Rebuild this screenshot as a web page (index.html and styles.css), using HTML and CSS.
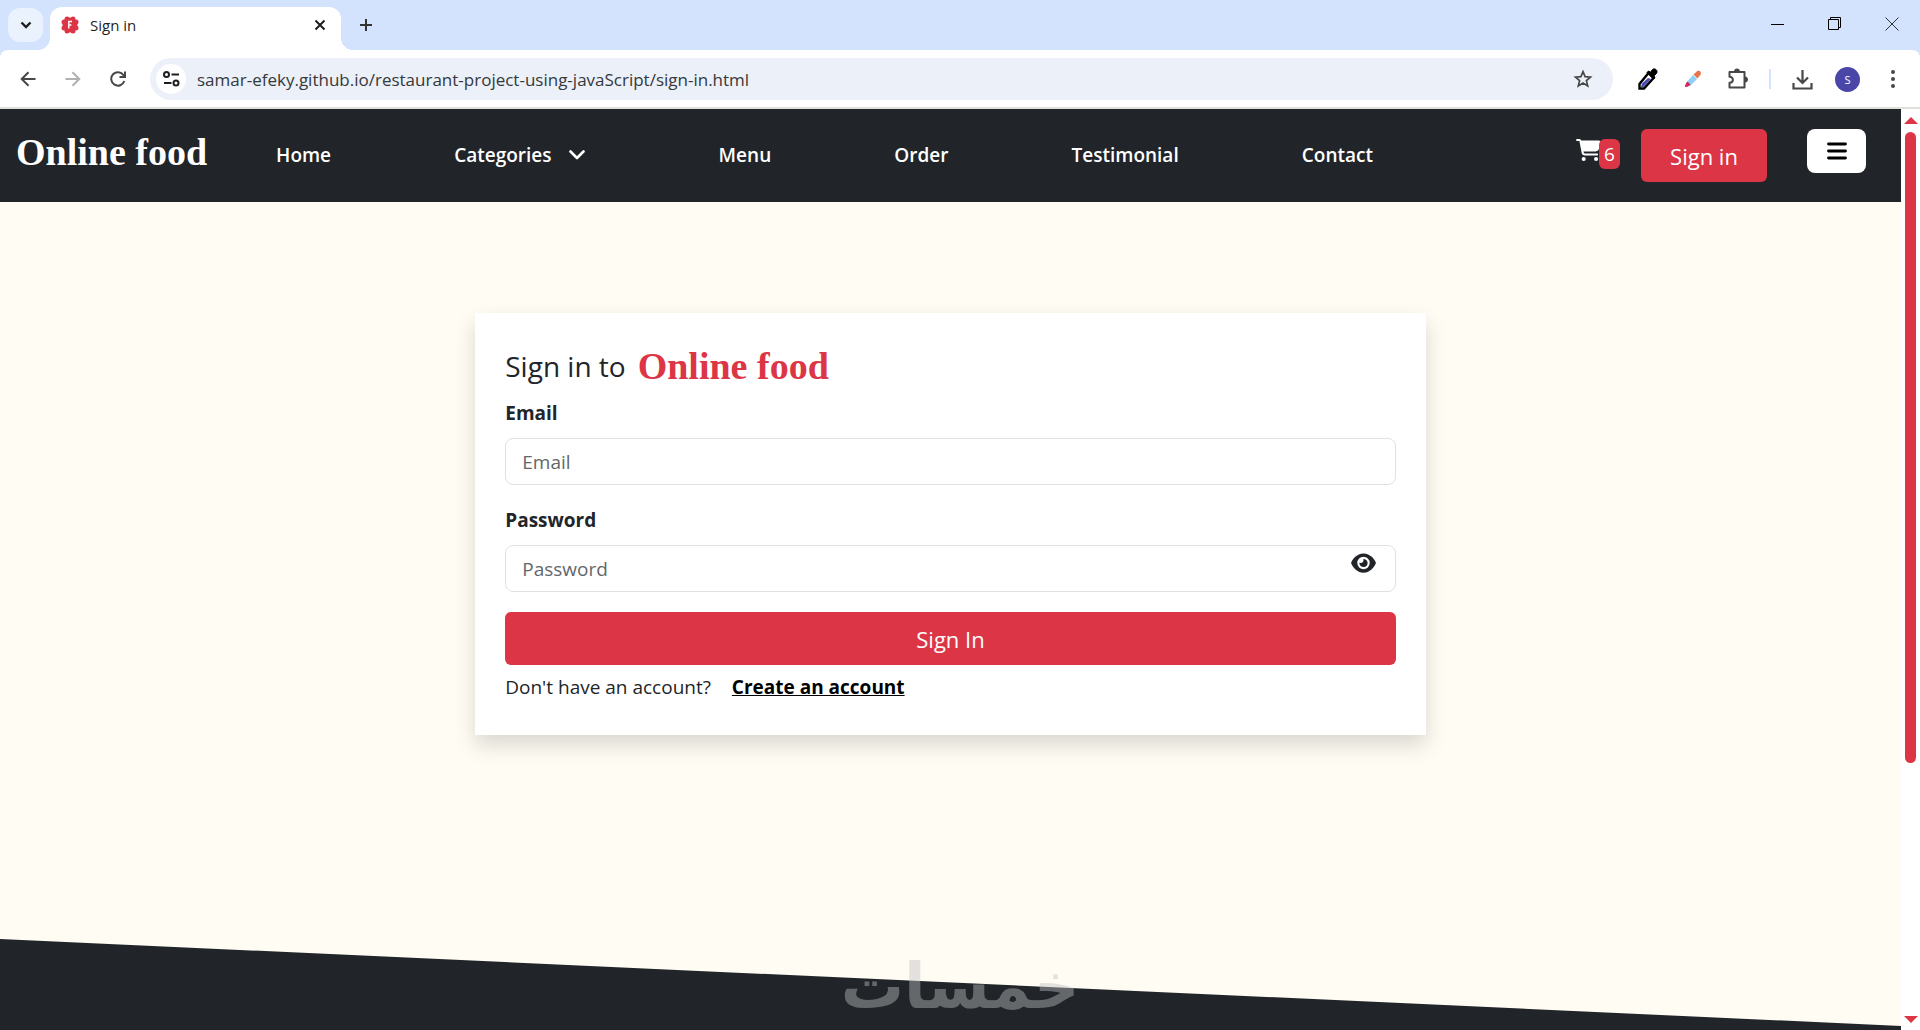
FILE: index.html
```html
<!DOCTYPE html>
<html lang="en">
  <head>
    <meta charset="UTF-8" />
    <meta name="viewport" content="width=device-width, initial-scale=1.0" />
    <title>Sign in</title>
    <link rel="stylesheet" href="styles.css">
  </head>
  <body>
    <!-- browser tabs -->
    <div class="tab-strip">
      <button class="tab-search" aria-label="Search tabs">
        <svg width="12" height="8" viewBox="0 0 12 8"><path d="M1.5 1.5 6 6l4.5-4.5" fill="none" stroke="#1f1f1f" stroke-width="2.4" /></svg>
      </button>
      <div class="tab">
        <svg width="18" height="18" viewBox="0 0 18 18">
          <g fill="#dc3545">
            <circle cx="9" cy="9" r="7.5" />
            <circle cx="6" cy="3" r="2.5" /><circle cx="12" cy="3" r="2.5" />
            <circle cx="15" cy="6" r="2.5" /><circle cx="15" cy="12" r="2.5" />
            <circle cx="12" cy="15" r="2.5" /><circle cx="6" cy="15" r="2.5" />
            <circle cx="3" cy="12" r="2.5" /><circle cx="3" cy="6" r="2.5" />
          </g>
          <path d="M7.8 12.5v-7H11M7.800 9h2.6" fill="none" stroke="#fff" stroke-width="1.4" />
        </svg>
        <span class="tab-title">Sign in</span>
        <button class="tab-close" aria-label="Close tab">
          <svg width="12" height="12" viewBox="0 0 12 12"><path d="m1.5 1.5 9 9m0-9-9 9" stroke="#1f1f1f" stroke-width="2" /></svg>
        </button>
      </div>
      <button class="new-tab" aria-label="New tab">
        <svg width="14" height="14" viewBox="0 0 14 14"><path d="M7 1v12M1 7h12" stroke="#333" stroke-width="2" /></svg>
      </button>
      <div class="window-buttons">
        <button aria-label="Minimize"><svg width="14" height="14" viewBox="0 0 14 14"><path d="M0 7h13v1H0z" /></svg></button>
        <button aria-label="Restore"><svg width="14" height="14" viewBox="0 0 14 14"><path d="M.5 2.5h10v10H.5zM2.5 2.5v-2h10v10h-2" fill="none" stroke="#000" /></svg></button>
        <button aria-label="Close"><svg width="14" height="14" viewBox="0 0 14 14"><path d="m.5.5 13 13m0-13-13 13" stroke="#333" /></svg></button>
      </div>
    </div>

    <!-- browser toolbar -->
    <div class="toolbar-wrap">
      <div class="toolbar">
        <button class="tool" aria-label="Back">
          <svg width="16" height="16" viewBox="0 0 16 16"><path d="M15.5 8H2M8.500 1.2 1.7 8l6.800 6.800" fill="none" stroke="#474747" stroke-width="2" /></svg>
        </button>
        <button class="tool" aria-label="Forward">
          <svg width="16" height="16" viewBox="0 0 16 16"><path d="M.5 8H14M7.500 1.2 14.3 8l-6.800 6.800" fill="none" stroke="#b0b1b0" stroke-width="2" /></svg>
        </button>
        <button class="tool" aria-label="Reload">
          <svg width="16" height="16" viewBox="0 0 16 16"><path d="M14.3 10A6.700 6.700 0 1 1 13.5 4.2L15 6M15 .5V6H9.500" fill="none" stroke="#474747" stroke-width="2" /></svg>
        </button>
        <div class="omnibox">
          <button class="site-info" aria-label="View site information">
            <svg width="17" height="16" viewBox="0 0 17 16"><g fill="none" stroke="#1f1f1f" stroke-width="2"><circle cx="3.5" cy="3.5" r="2.5" /><path d="M8.500 3.5H16M1 12h7.500" /><circle cx="13" cy="12" r="2.5" /></g></svg>
          </button>
          <input type="text" class="url" aria-label="Address" value="samar-efeky.github.io/restaurant-project-using-javaScript/sign-in.html" />
          <button class="star" aria-label="Bookmark this page">
            <svg width="20" height="20" viewBox="0 0 20 20"><path d="m10 2.6 2.1 5 5.4.5-4.1 3.5 1.3 5.3-4.700-2.800-4.700 2.800 1.300-5.300L2.500 8.100l5.400-.5z" fill="none" stroke="#474747" stroke-width="1.7" /></svg>
          </button>
        </div>
        <button class="tool" aria-label="Color picker">
          <svg width="20" height="22" viewBox="0 0 20 22">
            <path d="m10.5 5 5 5-9.500 10.500H1.500V16z" fill="#fff" stroke="#000" stroke-width="2.4" />
            <path d="m4 15.5 6-5.500 3 1-7.500 8H3z" fill="#4b4cae" />
            <path d="M9 4.500 10.500 3l2 1.200 2-2.700c2-2 6 1 4 4l-2.500 2.300 1 2L15.500 11z" stroke="#000" />
          </svg>
        </button>
        <button class="tool" aria-label="Eyedropper">
          <svg width="18" height="18" viewBox="0 0 18 18">
            <path d="m9 5 4 4-7 7-4-3z" fill="#8ed0f5" />
            <path d="M9.500 4.500 13 1.300c3-1.500 4.800 1 3.500 3.500L13.500 8.500z" fill="#e8744a" />
            <path d="m3.500 11.500 3 3c-1.500 2-3.500 2.500-5.500 2.500 0-2.500 1-4 2.500-5.500z" fill="#d9265b" />
          </svg>
        </button>
        <button class="tool" aria-label="Extensions">
          <svg width="22" height="22" viewBox="0 0 22 22"><path d="M2.500 4h15v15.500h-15v-4.700c4.500 0 4.500-6 0-6z" fill="none" stroke="#474747" stroke-width="2" stroke-linejoin="round" /><path d="M7 3.500c0-4 6-4 6 0zM18 8.500c4 0 4 6 0 6z" fill="#474747" /></svg>
        </button>
        <span class="tool-divider"></span>
        <button class="tool" aria-label="Downloads">
          <svg width="21" height="21" viewBox="0 0 21 21"><path d="M10.500 1v12.500M5 8.500l5.500 5.500L16 8.500M1.500 14v5.500h18V14" fill="none" stroke="#474747" stroke-width="2.2" /></svg>
        </button>
        <button class="tool" aria-label="Profile"><span class="avatar">S</span></button>
        <button class="tool" aria-label="Menu">
          <svg width="4" height="18" viewBox="0 0 4 18"><g fill="#474747"><circle cx="2" cy="2" r="2" /><circle cx="2" cy="9" r="2" /><circle cx="2" cy="16" r="2" /></g></svg>
        </button>
      </div>
    </div>

    <div class="viewport">
      <div class="page">
        <header class="navbar">
          <a href="#" class="brand">Online food</a>
          <nav>
            <ul class="nav-links">
              <li><a href="#">Home</a></li>
              <li class="has-menu">
                <a href="#">Categories
                  <svg width="16" height="10" viewBox="0 0 16 10"><path d="m1.5 1.5 6.500 6.500 6.500-6.500" fill="none" stroke="#fff" stroke-width="2.6" stroke-linecap="round" stroke-linejoin="round" /></svg>
                </a>
              </li>
              <li><a href="#">Menu</a></li>
              <li><a href="#">Order</a></li>
              <li><a href="#">Testimonial</a></li>
              <li><a href="#">Contact</a></li>
            </ul>
          </nav>
          <div class="actions">
            <a href="#" class="cart" aria-label="Cart">
              <svg width="25" height="22" viewBox="0 0 576 512"><path fill="#fff" d="M0 24C0 10.700 10.700 0 24 0H69.500c22 0 41.500 12.800 50.600 32h411c26.300 0 45.500 25 38.600 50.400l-41 152.300c-8.500 31.400-37 53.300-69.500 53.300H170.700l5.400 28.500c2.200 11.300 12.100 19.500 23.600 19.500H488c13.300 0 24 10.700 24 24s-10.700 24-24 24H199.700c-34.600 0-64.300-24.600-70.700-58.500L77.400 54.500c-.7-3.800-4-6.500-7.900-6.500H24C10.700 48 0 37.300 0 24zM128 464a48 48 0 1 1 96 0 48 48 0 1 1-96 0zm336-48a48 48 0 1 1 0 96 48 48 0 1 1 0-96z" /></svg>
              <span class="cart-count">6</span>
            </a>
            <button class="btn btn-nav">Sign in</button>
            <button class="menu-toggle" aria-label="Open menu">
              <svg width="20" height="18" viewBox="0 0 20 18"><path d="M1.500 2h17M1.500 9h17M1.500 16h17" stroke="#000" stroke-width="2.8" stroke-linecap="round" /></svg>
            </button>
          </div>
        </header>

        <main>
          <form class="card">
            <h1>Sign in to <span class="brand-red">Online food</span></h1>
            <label for="email">Email</label>
            <input type="email" id="email" class="field" placeholder="Email" />
            <label for="password">Password</label>
            <div class="password-box">
              <input type="password" id="password" class="field" placeholder="Password" />
              <button type="button" class="show-password" aria-label="Show password">
                <svg width="25" height="22" viewBox="0 0 576 512"><path fill="#212529" d="M288 32c-80.800 0-145.500 36.800-192.600 80.600C48.600 156 17.300 208 2.500 243.700c-3.300 7.900-3.300 16.700 0 24.600C17.300 304 48.600 356 95.400 399.400C142.500 443.200 207.200 480 288 480s145.500-36.800 192.600-80.600c46.800-43.500 78.100-95.400 93-131.100c3.300-7.900 3.300-16.700 0-24.600c-14.900-35.700-46.200-87.700-93-131.100C433.500 68.800 368.800 32 288 32zM144 256a144 144 0 1 1 288 0 144 144 0 1 1-288 0zm144-64c0 35.300-28.700 64-64 64c-7.100 0-13.900-1.200-20.300-3.300c-5.500-1.800-11.900 1.600-11.700 7.400c.3 6.900 1.300 13.800 3.200 20.700c13.700 51.200 66.400 81.600 117.600 67.900s81.600-66.400 67.900-117.600c-11.100-41.500-47.800-69.400-88.600-71.100c-5.800-.2-9.200 6.100-7.400 11.700c2.100 6.400 3.300 13.200 3.300 20.300z" /></svg>
              </button>
            </div>
            <button type="submit" class="btn btn-submit">Sign In</button>
            <p class="signup">Don't have an account? <a href="#">Create an account</a></p>
          </form>
        </main>

        <footer class="footer"></footer>
      </div>
      <div class="scrollbar">
        <span class="arrow-up"></span>
        <div class="track"><div class="thumb"></div></div>
        <span class="arrow-down"></span>
      </div>
    </div>
    <div class="watermark" lang="ar" dir="rtl">خمسات</div>
  </body>
</html>
```
FILE: styles.css
```css
* {
  box-sizing: border-box;
}
body {
  margin: 0;
  height: 100vh;
  display: flex;
  flex-direction: column;
  overflow: hidden;
  position: relative;
  font-family: "Open Sans", sans-serif;
  font-size: 19px;
  line-height: 30px;
  color: #212529;
}
button,
input {
  font-family: inherit;
  font-size: inherit;
}
button {
  display: flex;
  align-items: center;
  justify-content: center;
  padding: 0;
  border: none;
  background: none;
  cursor: pointer;
}
svg {
  display: block;
}

/* tabs */
.tab-strip {
  display: flex;
  height: 50px;
  padding-left: 8px;
  background: #d3e3fd;
}
.tab-search {
  width: 35px;
  height: 34px;
  margin: 8px 7px 0 0;
  border-radius: 12px;
  background: #e9f2fd;
}
.tab {
  position: relative;
  display: flex;
  align-items: center;
  width: 291px;
  height: 43px;
  margin-top: 7px;
  padding: 0 14px 7px 11px;
  border-radius: 12px 12px 0 0;
  background: #fff;
}
.tab::before,
.tab::after {
  content: "";
  position: absolute;
  bottom: 0;
  width: 12px;
  height: 12px;
}
.tab::before {
  left: -12px;
  background: radial-gradient(circle at 0 0, transparent 12px, #fff 12px);
}
.tab::after {
  right: -12px;
  background: radial-gradient(circle at 100% 0, transparent 12px, #fff 12px);
}
.tab-title {
  flex: 1;
  margin-left: 11px;
  font-size: 15px;
  color: #1f1f1f;
}
.new-tab,
.tab-close {
  height: 36px;
}
.tab-close {
  width: 14px;
}
.new-tab {
  width: 50px;
  margin-top: 7px;
}
.window-buttons {
  display: flex;
  margin-left: auto;
}
.window-buttons button {
  width: 57px;
  height: 48px;
}

/* toolbar */
.toolbar-wrap {
  background: #d3e3fd;
}
.toolbar {
  display: flex;
  align-items: center;
  height: 59px;
  padding: 1px 5px 0 5px;
  border-bottom: 2px solid #dfe2dc;
  border-radius: 8px 8px 0 0;
  background: #fff;
}
.tool {
  width: 45px;
  height: 42px;
}
.omnibox {
  flex: 1;
  display: flex;
  align-items: center;
  height: 42px;
  margin: 0 12px 0 10px;
  padding: 0 20px 0 6px;
  border-radius: 21px;
  background: #ebf0f9;
}
.site-info {
  width: 30px;
  height: 30px;
  border-radius: 50%;
  background: #fff;
}
.url {
  flex: 1;
  margin-left: 11px;
  padding: 0;
  border: none;
  outline: none;
  background: none;
  font-size: 17px;
  color: #36383b;
}
.tool-divider {
  width: 2px;
  height: 20px;
  margin: 0 9px;
  background: #d3e3fd;
}
.avatar {
  width: 25px;
  height: 25px;
  border-radius: 50%;
  background: #4a46a8;
  color: #fff;
  font-size: 11px;
  line-height: 25px;
}

/* page */
.viewport {
  flex: 1;
  display: flex;
  min-height: 0;
}
.page {
  flex: 1;
  display: flex;
  flex-direction: column;
  background: #fffcf4;
}
.navbar {
  display: flex;
  align-items: flex-start;
  height: 93px;
  padding: 20px 35px 0 16px;
  background: #212529;
}
.brand,
.brand-red {
  font-family: "Liberation Serif", serif;
  font-size: 38px;
  font-weight: 700;
  line-height: 46px;
}
.brand {
  color: #fff;
  text-decoration: none;
}
nav {
  flex: 1;
  margin: 0 203px 0 69px;
}
.nav-links {
  display: flex;
  justify-content: space-between;
  margin: 0;
  padding: 11px 0 0;
  list-style: none;
}
.nav-links a {
  display: flex;
  align-items: center;
  gap: 17px;
  color: #fff;
  font-weight: 600;
  text-decoration: none;
}
.has-menu {
  padding-right: 11px;
}
.actions {
  display: flex;
  align-items: flex-start;
}
.cart {
  display: flex;
  margin: 10px 21px 0 0;
  color: #fff;
  text-decoration: none;
}
.cart-count {
  width: 21px;
  height: 30px;
  margin-left: -2px;
  border-radius: 6px;
  background: #dc3545;
  text-align: center;
}
.btn {
  height: 53px;
  border-radius: 6px;
  background: #dc3545;
  color: #fff;
  font-size: 22px;
}
.btn-nav {
  width: 126px;
}
.menu-toggle {
  width: 59px;
  height: 44px;
  margin-left: 40px;
  border-radius: 8px;
  background: #fff;
}

/* sign in form */
main {
  flex: 1;
  padding-top: 111px;
}
.card {
  width: 50%;
  margin: 0 auto;
  padding: 30px;
  background: #fff;
  box-shadow: 0 10px 20px rgba(0, 0, 0, 0.15);
}
.card h1 {
  display: flex;
  align-items: center;
  gap: 12px;
  margin: 0 0 9px;
  font-size: 28px;
  font-weight: 500;
  line-height: 46px;
}
.brand-red {
  color: #dc3545;
}
.card label {
  display: block;
  margin-bottom: 10px;
  font-weight: 700;
}
.field {
  display: block;
  width: 100%;
  height: 47px;
  margin-bottom: 20px;
  padding: 0 16px;
  border: 1px solid #dee2e6;
  border-radius: 8px;
}
.field::placeholder {
  color: #63676b;
}
.password-box {
  position: relative;
}
.show-password {
  position: absolute;
  top: 7px;
  right: 20px;
}
.btn-submit {
  width: 100%;
}
.signup {
  margin: 7px 0 3px;
}
.signup a {
  margin-left: 16px;
  color: #000;
  font-weight: 700;
}
.footer {
  height: 91px;
  background: #212529;
  clip-path: polygon(0 0, 100% 87px, 100% 100%, 0 100%);
}

/* scrollbar */
.scrollbar {
  display: flex;
  flex-direction: column;
  align-items: center;
  width: 19px;
  padding: 8px 0 7px;
  background: #fff;
}
.track {
  flex: 1;
  margin: 8px 0;
}
.thumb {
  width: 11px;
  height: 72%;
  border-radius: 6px;
  background: #dc3545;
}
.arrow-up,
.arrow-down {
  border: 7px solid transparent;
}
.arrow-up {
  border-top: none;
  border-bottom-color: #dc3545;
}
.arrow-down {
  border-bottom: none;
  border-top-color: #dc3545;
}

.watermark {
  position: absolute;
  bottom: 12px;
  left: 0;
  right: 0;
  text-align: center;
  font-family: "DejaVu Sans", sans-serif;
  font-size: 63px;
  font-weight: 700;
  line-height: 63px;
  color: #c0c0c0;
  opacity: 0.43;
  pointer-events: none;
}
```
